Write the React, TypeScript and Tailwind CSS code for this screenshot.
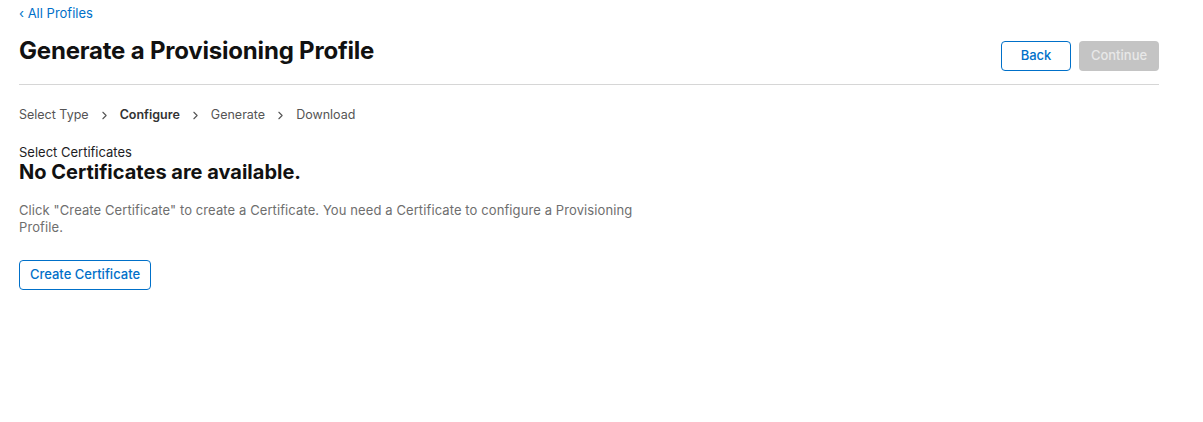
import { ChevronRight } from "lucide-react";

const STEPS = [
  { label: "Select Type", current: false },
  { label: "Configure", current: true },
  { label: "Generate", current: false },
  { label: "Download", current: false },
];

export default function App() {
  return (
    <div className="min-h-[422px] bg-white font-['Inter','Liberation_Sans',sans-serif] text-[#1d1d1f]">
      <div className="ml-[19px] w-[1140px]">
        <a href="#" className="block pt-[5px] text-[13px] leading-[16px] text-[#0070c9]">
          ‹ All Profiles
        </a>

        <div className="mt-[10px] flex items-center justify-between border-b border-[#d6d6d6] pb-[13px]">
          <h1 className="text-[24px] font-bold leading-[30px] tracking-[-0.2px] text-[#111]">
            Generate a Provisioning Profile
          </h1>
          <div className="mt-[10px] flex gap-[8px]">
            <button className="h-[30px] w-[70px] rounded-[4px] border border-[#0070c9] text-[13px] font-medium text-[#0070c9]">
              Back
            </button>
            <button
              disabled
              className="h-[30px] w-[80px] rounded-[4px] bg-[#c4c4c4] text-[13px] font-medium text-[#e8e8e8]"
            >
              Continue
            </button>
          </div>
        </div>

        <nav className="mt-[22px] flex items-center text-[12.5px] leading-[16px] text-[#555]">
          {STEPS.map((s, i) => (
            <span key={s.label} className="flex items-center">
              {i > 0 && <ChevronRight className="mx-[9px] h-[13px] w-[13px] text-[#555]" strokeWidth={2} />}
              <span className={s.current ? "font-semibold text-[#333]" : ""}>{s.label}</span>
            </span>
          ))}
        </nav>

        <div className="mt-[21px] text-[13px] leading-[16px] text-[#1d1d1f]">Select Certificates</div>
        <h2 className="text-[20px] font-bold leading-[24px] text-[#111]">No Certificates are available.</h2>

        <p className="mt-[18px] w-[620px] text-[13px] leading-[17px] tracking-[0.1px] text-[#6e6e6e]">
          Click "Create Certificate" to create a Certificate. You need a Certificate to configure a Provisioning
          Profile.
        </p>

        <button className="mt-[24px] h-[30px] w-[132px] rounded-[4px] border border-[#0070c9] text-[13px] font-medium text-[#0070c9]">
          Create Certificate
        </button>
      </div>
    </div>
  );
}
